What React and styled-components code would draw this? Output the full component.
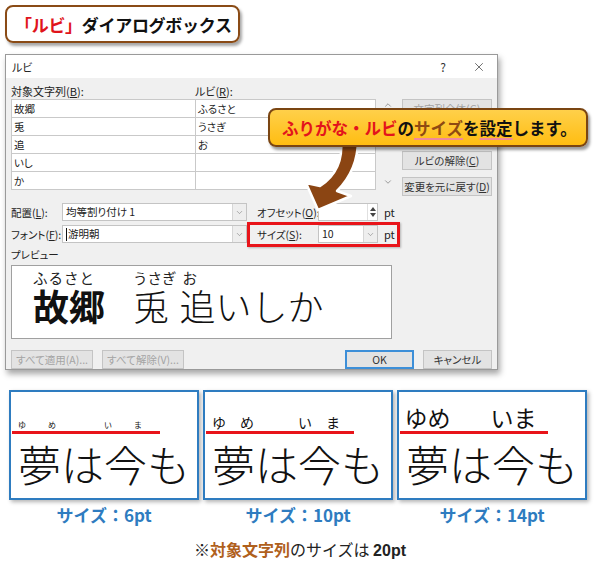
import React from "react";
import styled, { createGlobalStyle } from "styled-components";
import { X, ChevronDown, ChevronUp } from "lucide-react";

const GlobalStyle = createGlobalStyle`
  html, body { margin: 0; padding: 0; background: #fff; }
  body { font-family: "Noto Sans CJK JP", "Noto Sans", sans-serif; color: #222; }
  * { box-sizing: border-box; }
`;

const Page = styled.div`
  position: relative;
  width: 600px;
  height: 580px;
  padding: 5px 5px 0 5px;
  overflow: hidden;
  background: #fff;
`;

/* ---------- title ---------- */
const TitleBox = styled.div`
  width: 235px;
  height: 38px;
  border: 2px solid #8a4b16;
  border-radius: 8px;
  box-shadow: 2px 3px 3px rgba(0, 0, 0, 0.35);
  display: flex;
  align-items: center;
  padding-left: 8px;
  font-size: 17px;
  font-weight: 700;
  color: #111;
  letter-spacing: -0.3px;
  white-space: nowrap;
`;
const Red = styled.span`
  color: #e0141c;
`;

/* ---------- dialog ---------- */
const Dialog = styled.div`
  margin-top: 11px;
  width: 493px;
  height: 316px;
  border: 1px solid #9a9a9a;
  background: #f0f0f0;
  box-shadow: 2px 4px 6px rgba(0, 0, 0, 0.35);
  display: flex;
  flex-direction: column;
  font-feature-settings: "palt";
`;
const DlgTitle = styled.div`
  height: 23px;
  flex: none;
  background: #fff;
  display: flex;
  align-items: center;
  padding-left: 6px;
  font-size: 11px;
  color: #222;
`;
const TitleButtons = styled.div`
  margin-left: auto;
  display: flex;
  height: 100%;
`;
const TitleBtn = styled.div`
  width: 36px;
  height: 100%;
  display: flex;
  align-items: center;
  justify-content: center;
  font-size: 12px;
  color: #333;
`;
const DlgBody = styled.div`
  flex: 1;
  padding: 7px 5px 0 5px;
  font-size: 11px;
  color: #222;
`;
const TopSection = styled.div`
  display: flex;
`;
const LeftBlock = styled.div`
  width: 384px;
`;
const HeaderRow = styled.div`
  display: flex;
  height: 13px;
  line-height: 13px;
  margin-bottom: 1px;
`;
const HeaderLabel = styled.div`
  width: ${(p) => p.$w}px;
  white-space: nowrap;
`;
const U = styled.span`
  text-decoration: underline;
`;
const TableWrap = styled.div`
  display: flex;
`;
const Table = styled.div`
  display: grid;
  grid-template-columns: 184px 180px;
  grid-auto-rows: 18px;
  border-top: 1px solid #c9c9c9;
  border-left: 1px solid #c9c9c9;
`;
const Cell = styled.div`
  background: #fff;
  border-right: 1px solid #c9c9c9;
  border-bottom: 1px solid #c9c9c9;
  padding-left: 2px;
  font-size: 10.5px;
  line-height: 17px;
  white-space: nowrap;
`;
const ScrollCol = styled.div`
  width: 20px;
  display: flex;
  flex-direction: column;
  justify-content: space-between;
  align-items: center;
  padding: 1px 0 3px 4px;
  color: #666;
`;
const SideButtons = styled.div`
  margin-left: 7px;
  width: 90px;
  padding-top: 14px;
  display: flex;
  flex-direction: column;
  gap: 7px;
`;
const WinButton = styled.div`
  width: ${(p) => (p.$w ? `${p.$w}px` : "100%")};
  height: 19px;
  background: #e3e3e3;
  border: ${(p) => (p.$primary ? "2px solid #3d8fd8" : "1px solid #c4c4c4")};
  display: flex;
  align-items: center;
  justify-content: center;
  font-size: 10.5px;
  color: ${(p) => (p.$disabled ? "#a3a3a3" : "#333")};
  white-space: nowrap;
`;
const Options = styled.div`
  margin-top: 7px;
  display: flex;
  flex-direction: column;
  gap: 4px;
`;
const OptionRow = styled.div`
  display: flex;
  align-items: center;
  height: 18px;
`;
const OptLabel = styled.div`
  width: ${(p) => p.$w}px;
  flex: none;
  white-space: nowrap;
  font-size: 10.5px;
`;
const Combo = styled.div`
  width: ${(p) => p.$w}px;
  height: 18px;
  flex: none;
  display: flex;
  background: #fff;
  border: 1px solid #c4c4c4;
  font-size: 10.5px;
  line-height: 16px;
`;
const ComboText = styled.div`
  flex: 1;
  padding-left: 3px;
  display: flex;
  align-items: center;
  white-space: nowrap;
`;
const Caret = styled.span`
  width: 1px;
  height: 13px;
  background: #111;
  margin-right: 1px;
`;
const ComboDrop = styled.div`
  width: 14px;
  border-left: 1px solid #d6d6d6;
  background: #eeeeee;
  display: flex;
  align-items: center;
  justify-content: center;
  color: #777;
`;
const SpinBox = styled.div`
  width: 10px;
  display: flex;
  flex-direction: column;
  justify-content: center;
  align-items: center;
  gap: 2px;
  border-left: 1px solid #e0e0e0;
`;
const RightGroup = styled.div`
  display: flex;
  align-items: center;
  flex: none;
  margin-left: ${(p) => (p.$highlight ? 0 : 10)}px;
  height: ${(p) => (p.$highlight ? 25 : 18)}px;
  padding: ${(p) => (p.$highlight ? "0 2px 0 7px" : "0")};
  border: ${(p) => (p.$highlight ? "3px solid #e8141a" : "none")};
  box-shadow: ${(p) => (p.$highlight ? "1px 1px 2px rgba(0,0,0,.25)" : "none")};
`;
const Pt = styled.div`
  margin-left: 6px;
  font-size: 11px;
`;
const PreviewLabel = styled.div`
  margin-top: 6px;
  height: 12px;
  line-height: 12px;
  font-size: 10.5px;
`;
const PreviewBox = styled.div`
  margin-top: 4px;
  width: 381px;
  height: 74px;
  background: #fff;
  border: 1px solid #a0a0a0;
  display: flex;
  align-items: flex-end;
  padding: 0 0 15px 21px;
  font-feature-settings: normal;
`;
const RubyGroup = styled.div`
  display: flex;
  flex-direction: column;
  margin-left: ${(p) => p.$ml || 0}px;
`;
const PRuby = styled.div`
  font-size: 14.5px;
  line-height: 15px;
  height: 15px;
  margin-bottom: 2px;
  letter-spacing: ${(p) => p.$ls || 0}px;
  padding-left: ${(p) => p.$pl || 0}px;
  white-space: nowrap;
`;
const PBase = styled.div`
  font-size: 36px;
  line-height: 36px;
  font-weight: ${(p) => (p.$bold ? 700 : 300)};
  letter-spacing: ${(p) => p.$ls || 0}px;
  color: #111;
  white-space: nowrap;
`;
const BottomRow = styled.div`
  margin-top: 11px;
  display: flex;
  align-items: center;
  gap: 9px;
`;
const Spacer = styled.div`
  flex: 1;
`;

/* ---------- callout ---------- */
const Callout = styled.div`
  position: absolute;
  left: 268px;
  top: 108px;
  width: 320px;
  height: 39px;
  border: 2px solid #7a4512;
  border-radius: 8px;
  background: linear-gradient(#ffd04a, #ffbd12);
  box-shadow: 2px 3px 3px rgba(0, 0, 0, 0.4);
  display: flex;
  align-items: center;
  padding-left: 12px;
  font-size: 16.5px;
  font-weight: 700;
  color: #111;
  white-space: nowrap;
  z-index: 3;
`;
const CRed = styled.span`
  color: #e3141c;
`;
const CBrown = styled.span`
  color: #8f4a12;
  text-decoration: underline;
  text-decoration-color: #f08a9a;
  text-decoration-thickness: 2px;
  text-underline-offset: 3px;
`;
const CUnder = styled.span`
  text-decoration: underline;
  text-decoration-color: #f08a9a;
  text-decoration-thickness: 2px;
  text-underline-offset: 3px;
`;
const ArrowSvg = styled.svg`
  position: absolute;
  left: 0;
  top: 0;
  width: 600px;
  height: 580px;
  pointer-events: none;
  z-index: 2;
`;

/* ---------- samples ---------- */
const Samples = styled.div`
  margin-top: 20px;
  margin-left: 4px;
  display: flex;
  gap: 4px;
`;
const SampleCol = styled.div`
  width: 190px;
  display: flex;
  flex-direction: column;
  align-items: center;
`;
const SampleBox = styled.div`
  width: 190px;
  height: 110px;
  border: 2px solid #2e7cc0;
  box-shadow: 2px 2px 4px rgba(0, 0, 0, 0.3);
  background: #fff;
  align-self: stretch;
  color: #111;
`;
const RubyLine = styled.div`
  margin-left: 1px;
  width: 148px;
  height: 42px;
  border-bottom: 3px solid #e8141a;
  display: flex;
  align-items: flex-end;
  padding: 0 0 1px 6px;
`;
const RubyCell = styled.div`
  width: 43px;
  flex: none;
  display: flex;
  justify-content: ${(p) => (p.$spread ? "space-between" : "center")};
  padding-right: ${(p) => (p.$spread ? p.$pr : 0)}px;
  font-size: ${(p) => p.$size}px;
  line-height: 1.1;
  white-space: nowrap;
  overflow: visible;
`;
const BaseText = styled.div`
  margin-top: 7px;
  padding-left: 7px;
  font-size: 43px;
  line-height: 44px;
  font-weight: 300;
  white-space: nowrap;
`;
const SampleLabel = styled.div`
  margin-top: 6px;
  height: 18px;
  line-height: 18px;
  font-size: 17px;
  font-weight: 700;
  color: #2e7cc0;
  white-space: nowrap;
`;
const Footer = styled.div`
  margin-top: 16px;
  width: 590px;
  text-align: center;
  font-size: 16px;
  line-height: 18px;
  color: #222;
`;
const FBrown = styled.span`
  color: #b0601c;
  font-weight: 700;
`;
const FBold = styled.span`
  font-weight: 700;
  font-family: "Liberation Sans", sans-serif;
`;

const tableRows = [
  ["故郷", "ふるさと"],
  ["兎", "うさぎ"],
  ["追", "お"],
  ["いし", ""],
  ["か", ""],
];

const samples = [
  { label: "サイズ：6pt", size: 8, spread: true, pr: 5 },
  { label: "サイズ：10pt", size: 14, spread: true, pr: 1 },
  { label: "サイズ：14pt", size: 23, spread: false, pr: 0 },
];

function Tri({ up }) {
  return (
    <svg width="6" height="4" viewBox="0 0 6 4">
      <path d={up ? "M0 4 L3 0 L6 4 Z" : "M0 0 L6 0 L3 4 Z"} fill="#444" />
    </svg>
  );
}

function Sample({ s }) {
  const ruby = (a, b) => (
    <RubyCell $spread={s.spread} $pr={s.pr} $size={s.size}>
      {s.spread ? (
        <>
          <span>{a}</span>
          <span>{b}</span>
        </>
      ) : (
        <span>{a + b}</span>
      )}
    </RubyCell>
  );
  return (
    <SampleCol>
      <SampleBox>
        <RubyLine>
          {ruby("ゆ", "め")}
          <RubyCell $size={s.size} />
          {ruby("い", "ま")}
        </RubyLine>
        <BaseText>夢は今も</BaseText>
      </SampleBox>
      <SampleLabel>{s.label}</SampleLabel>
    </SampleCol>
  );
}

export default function App() {
  return (
    <Page>
      <GlobalStyle />
      <TitleBox>
        <Red>「ルビ」</Red>ダイアログボックス
      </TitleBox>

      <Dialog>
        <DlgTitle>
          ルビ
          <TitleButtons>
            <TitleBtn>?</TitleBtn>
            <TitleBtn>
              <X size={14} strokeWidth={1.2} />
            </TitleBtn>
          </TitleButtons>
        </DlgTitle>
        <DlgBody>
          <TopSection>
            <LeftBlock>
              <HeaderRow>
                <HeaderLabel $w={184}>
                  対象文字列(<U>B</U>):
                </HeaderLabel>
                <HeaderLabel $w={180}>
                  ルビ(<U>R</U>):
                </HeaderLabel>
              </HeaderRow>
              <TableWrap>
                <Table>
                  {tableRows.map(([a, b], i) => (
                    <React.Fragment key={i}>
                      <Cell>{a}</Cell>
                      <Cell>{b}</Cell>
                    </React.Fragment>
                  ))}
                </Table>
                <ScrollCol>
                  <ChevronUp size={10} strokeWidth={1.5} />
                  <ChevronDown size={10} strokeWidth={1.5} />
                </ScrollCol>
              </TableWrap>
            </LeftBlock>
            <SideButtons>
              <WinButton $disabled>文字列全体(G)</WinButton>
              <WinButton $disabled>文字単位(M)</WinButton>
              <WinButton>
                ルビの解除(<U>C</U>)
              </WinButton>
              <WinButton>
                変更を元に戻す(<U>D</U>)
              </WinButton>
            </SideButtons>
          </TopSection>

          <Options>
            <OptionRow>
              <OptLabel $w={51}>
                配置(<U>L</U>):
              </OptLabel>
              <Combo $w={185}>
                <ComboText>均等割り付け 1</ComboText>
                <ComboDrop>
                  <ChevronDown size={9} strokeWidth={1.5} />
                </ComboDrop>
              </Combo>
              <RightGroup>
                <OptLabel $w={61}>
                  オフセット(<U>O</U>):
                </OptLabel>
                <Combo $w={60}>
                  <ComboText />
                  <SpinBox>
                    <Tri up />
                    <Tri />
                  </SpinBox>
                </Combo>
                <Pt>pt</Pt>
              </RightGroup>
            </OptionRow>
            <OptionRow>
              <OptLabel $w={51}>
                フォント(<U>F</U>):
              </OptLabel>
              <Combo $w={185}>
                <ComboText>
                  <Caret />
                  游明朝
                </ComboText>
                <ComboDrop>
                  <ChevronDown size={9} strokeWidth={1.5} />
                </ComboDrop>
              </Combo>
              <RightGroup $highlight>
                <OptLabel $w={61}>
                  サイズ(<U>S</U>):
                </OptLabel>
                <Combo $w={60}>
                  <ComboText>10</ComboText>
                  <ComboDrop>
                    <ChevronDown size={9} strokeWidth={1.5} />
                  </ComboDrop>
                </Combo>
                <Pt>pt</Pt>
              </RightGroup>
            </OptionRow>
          </Options>

          <PreviewLabel>プレビュー</PreviewLabel>
          <PreviewBox>
            <RubyGroup>
              <PRuby $ls={1}>ふるさと</PRuby>
              <PBase $bold>故郷</PBase>
            </RubyGroup>
            <RubyGroup $ml={28}>
              <PRuby>うさぎ</PRuby>
              <PBase>兎</PBase>
            </RubyGroup>
            <RubyGroup $ml={3}>
              <PRuby $pl={3}>お</PRuby>
              <PBase>追いしか</PBase>
            </RubyGroup>
          </PreviewBox>

          <BottomRow>
            <WinButton $w={82} $disabled>
              すべて適用(A)...
            </WinButton>
            <WinButton $w={82} $disabled>
              すべて解除(V)...
            </WinButton>
            <Spacer />
            <WinButton $w={69} $primary>
              OK
            </WinButton>
            <WinButton $w={69}>キャンセル</WinButton>
          </BottomRow>
        </DlgBody>
      </Dialog>

      <Samples>
        {samples.map((s) => (
          <Sample key={s.label} s={s} />
        ))}
      </Samples>
      <Footer>
        ※<FBrown>対象文字列</FBrown>のサイズは <FBold>20pt</FBold>
      </Footer>

      <ArrowSvg viewBox="0 0 600 580">
        <path
          d="M341 140 Q344 170 320 186 L306 183 L318 210 L351 196 L337 191 Q358 170 358 140 Z"
          fill="#8b4513"
          stroke="#fff"
          strokeWidth="2.5"
          strokeLinejoin="round"
        />
      </ArrowSvg>
      <Callout>
        <CRed>ふりがな・ルビ</CRed>の<CBrown>サイズ</CBrown>を<CUnder>設定</CUnder>します。
      </Callout>
    </Page>
  );
}
